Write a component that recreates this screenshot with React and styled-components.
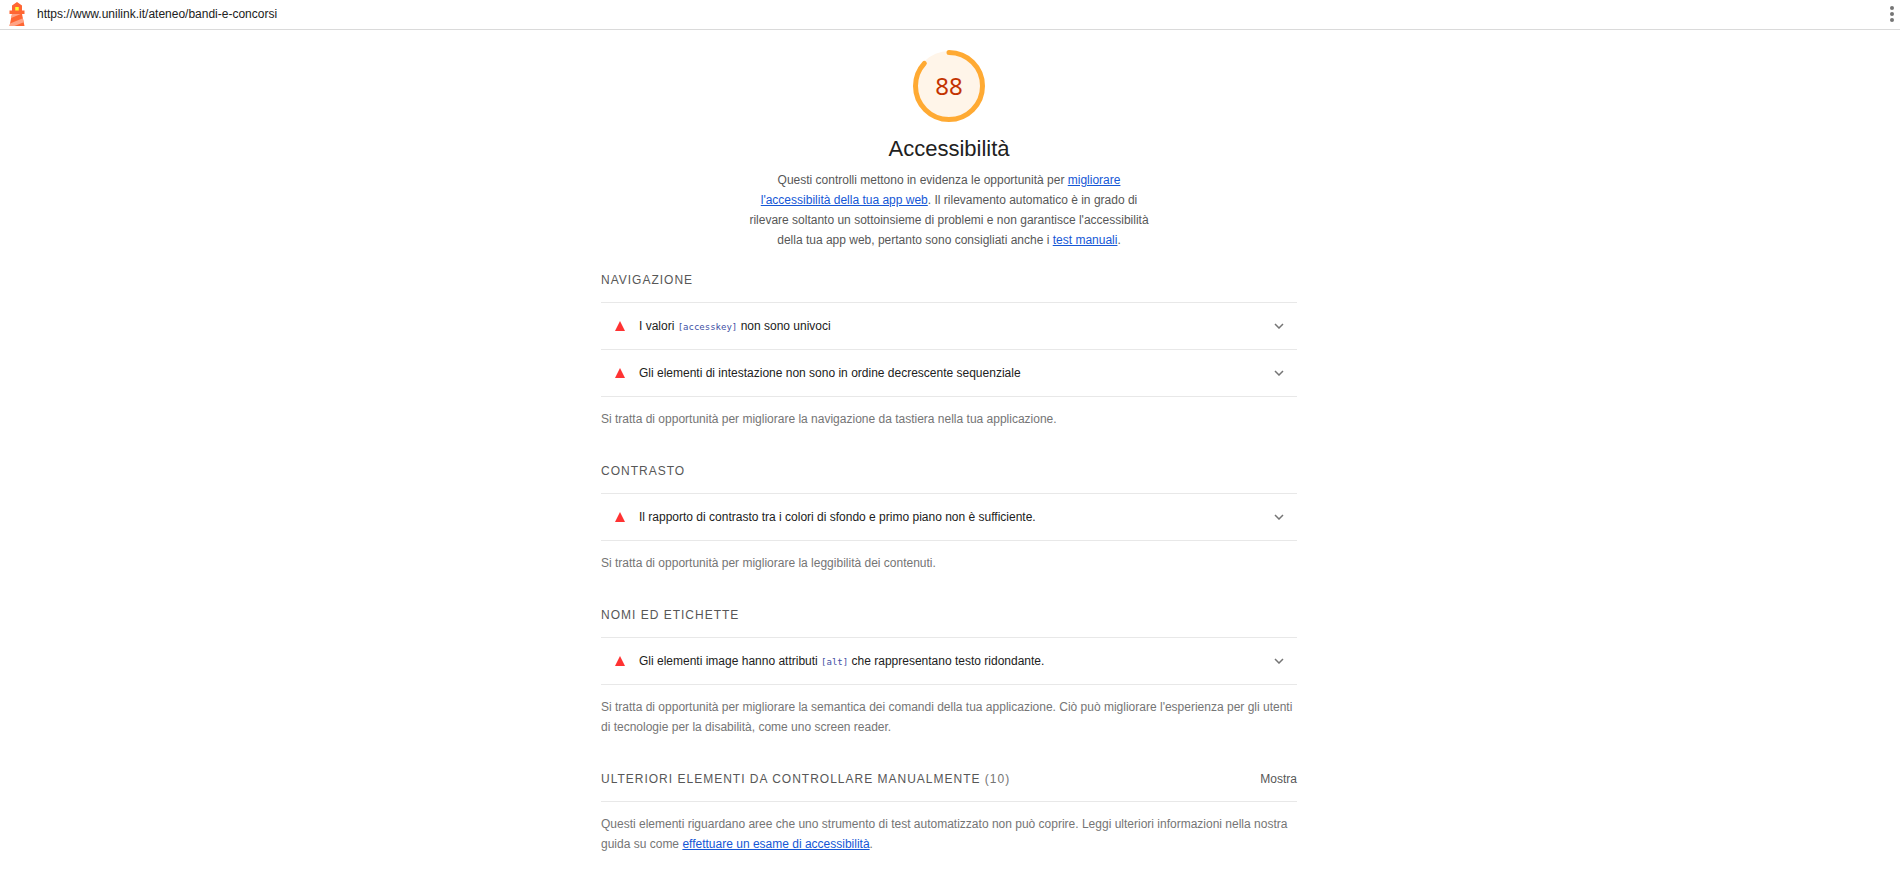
import React, { useState } from "react";
import styled, { createGlobalStyle } from "styled-components";

const groups = [
  {
    title: "Navigazione",
    audits: [
      <>
        I valori <code>[accesskey]</code> non sono univoci
      </>,
      "Gli elementi di intestazione non sono in ordine decrescente sequenziale",
    ],
    description:
      "Si tratta di opportunità per migliorare la navigazione da tastiera nella tua applicazione.",
  },
  {
    title: "Contrasto",
    audits: [
      "Il rapporto di contrasto tra i colori di sfondo e primo piano non è sufficiente.",
    ],
    description:
      "Si tratta di opportunità per migliorare la leggibilità dei contenuti.",
  },
  {
    title: "Nomi ed etichette",
    audits: [
      <>
        Gli elementi image hanno attributi <code>[alt]</code> che rappresentano
        testo ridondante.
      </>,
    ],
    description:
      "Si tratta di opportunità per migliorare la semantica dei comandi della tua applicazione. Ciò può migliorare l'esperienza per gli utenti di tecnologie per la disabilità, come uno screen reader.",
  },
];

const Logo = () => (
  <svg width="24" height="24" viewBox="0 0 48 48" aria-hidden="true">
    <path d="m14 7 10-7 10 7v10h5v7h-5l5 24H9l5-24H9v-7h5V7Z" fill="#ff6633" />
    <path
      d="M31.561 24H14l-1.689 8.105L31.561 24ZM18.983 48H9l1.022-4.907L35.723 32.27l1.663 7.98L18.983 48Z"
      fill="#ffa385"
    />
    <path d="M20.5 10h7v7h-7z" fill="#ffff33" />
  </svg>
);

const Gauge = ({ score }) => {
  const length = 2 * Math.PI * 33;
  return (
    <svg width="72" height="72" viewBox="0 0 72 72" aria-hidden="true">
      <circle cx="36" cy="36" r="35" fill="#fff5e9" />
      <circle
        cx="36"
        cy="36"
        r="33.5"
        fill="none"
        stroke="#ffaa33"
        strokeWidth="5"
        strokeLinecap="round"
        strokeDasharray={`${(score / 100) * length} 400`}
        transform="rotate(-90 36 36)"
      />
    </svg>
  );
};

const Audit = ({ children }) => {
  const [open, setOpen] = useState(false);
  return (
    <AuditItem>
      <AuditButton aria-expanded={open} onClick={() => setOpen(!open)}>
        <Triangle />
        <AuditTitle>{children}</AuditTitle>
        <Chevron $open={open} viewBox="0 0 10 6" aria-hidden="true">
          <path d="M1 1l4 4 4-4" />
        </Chevron>
      </AuditButton>
    </AuditItem>
  );
};

const App = () => {
  return (
    <>
      <GlobalStyle />
      <Topbar>
        <Logo />
        <Url href="https://www.unilink.it/ateneo/bandi-e-concorsi">
          https://www.unilink.it/ateneo/bandi-e-concorsi
        </Url>
        <MenuButton aria-label="Menu">
          <svg width="4" height="16" viewBox="0 0 4 16">
            <circle cx="2" cy="2" r="2" />
            <circle cx="2" cy="8" r="2" />
            <circle cx="2" cy="14" r="2" />
          </svg>
        </MenuButton>
      </Topbar>

      <Report>
        <Header>
          <Score>
            <Gauge score={88} />
            <Percent>88</Percent>
          </Score>
          <Title>Accessibilità</Title>
          <Intro>
            Questi controlli mettono in evidenza le opportunità per{" "}
            <a href="#migliorare">migliorare l'accessibilità della tua app web</a>
            . Il rilevamento automatico è in grado di rilevare soltanto un
            sottoinsieme di problemi e non garantisce l'accessibilità della tua
            app web, pertanto sono consigliati anche i{" "}
            <a href="#manuali">test manuali</a>.
          </Intro>
        </Header>

        {groups.map((group) => (
          <section key={group.title}>
            <GroupTitle>{group.title}</GroupTitle>
            <AuditList>
              {group.audits.map((audit, i) => (
                <Audit key={i}>{audit}</Audit>
              ))}
            </AuditList>
            <Description>{group.description}</Description>
          </section>
        ))}

        <section>
          <ManualHeader>
            <GroupTitle>
              Ulteriori elementi da controllare manualmente <span>(10)</span>
            </GroupTitle>
            <ShowButton>Mostra</ShowButton>
          </ManualHeader>
          <Description>
            Questi elementi riguardano aree che uno strumento di test
            automatizzato non può coprire. Leggi ulteriori informazioni nella
            nostra guida su come{" "}
            <a href="#esame">effettuare un esame di accessibilità</a>.
          </Description>
        </section>
      </Report>
    </>
  );
};

export default App;

const GlobalStyle = createGlobalStyle`
  * {
    box-sizing: border-box;
  }

  body {
    margin: 0;
    background: #fff;
    color: #212121;
    font-family: "Liberation Sans", Arial, sans-serif;
    font-size: 12px;
    line-height: 20px;
  }

  button {
    padding: 0;
    border: 0;
    background: none;
    color: inherit;
    font: inherit;
    cursor: pointer;
  }

  a {
    color: #1557d6;
  }

  code {
    color: #3f51a5;
    font-family: "DejaVu Sans Mono", monospace;
    font-size: 9px;
    line-height: 1;
  }
`;

const Topbar = styled.header`
  display: flex;
  align-items: center;
  height: 30px;
  padding: 0 6px 1px 5px;
  border-bottom: 1px solid #dadada;
`;

const Url = styled.a`
  margin-left: 8px;
  color: #212121;
  text-decoration: none;
`;

const MenuButton = styled.button`
  display: flex;
  margin-left: auto;
  fill: #757575;
`;

const Report = styled.main`
  width: 100%;
  max-width: 698px;
  margin: 0 auto;
  padding: 20px 2px 16px 0;
`;

const Header = styled.div`
  display: flex;
  flex-direction: column;
  align-items: center;
  margin-bottom: 20px;
`;

const Score = styled.div`
  display: grid;
  place-items: center;

  > * {
    grid-area: 1 / 1;
  }
`;

const Percent = styled.span`
  color: #c33300;
  font-family: "Noto Sans", sans-serif;
  font-size: 24px;
  line-height: 28px;
`;

const Title = styled.h1`
  margin: 13px 0 7px;
  font-size: 22px;
  font-weight: 400;
  line-height: 28px;
`;

const Intro = styled.p`
  max-width: 410px;
  margin: 0;
  color: #575757;
  text-align: center;
`;

const GroupTitle = styled.h2`
  margin: 0;
  padding-bottom: 12px;
  color: #575757;
  font-size: 12px;
  font-weight: 400;
  letter-spacing: 1px;
  text-transform: uppercase;

  span {
    color: #757575;
  }
`;

const AuditList = styled.ul`
  margin: 0;
  padding: 0;
  border-top: 1px solid #e8e8e8;
  list-style: none;
`;

const AuditItem = styled.li`
  border-bottom: 1px solid #e8e8e8;
`;

const AuditButton = styled.button`
  display: flex;
  align-items: center;
  width: 100%;
  height: 46px;
  padding: 0 13px 0 14px;
  text-align: left;
`;

const Triangle = styled.span`
  border-right: 5px solid transparent;
  border-bottom: 10px solid #f33;
  border-left: 5px solid transparent;
`;

const AuditTitle = styled.span`
  flex: 1;
  margin-left: 14px;
`;

const Chevron = styled.svg`
  width: 10px;
  height: 6px;
  fill: none;
  stroke: #757575;
  stroke-width: 1.5;
  transform: ${({ $open }) => ($open ? "rotate(180deg)" : "none")};
`;

const Description = styled.p`
  margin: 12px 0 32px;
  color: #757575;
`;

const ManualHeader = styled.div`
  display: flex;
  align-items: flex-start;
  justify-content: space-between;
  border-bottom: 1px solid #e8e8e8;
`;

const ShowButton = styled.button`
  color: #575757;
  line-height: 20px;
`;
